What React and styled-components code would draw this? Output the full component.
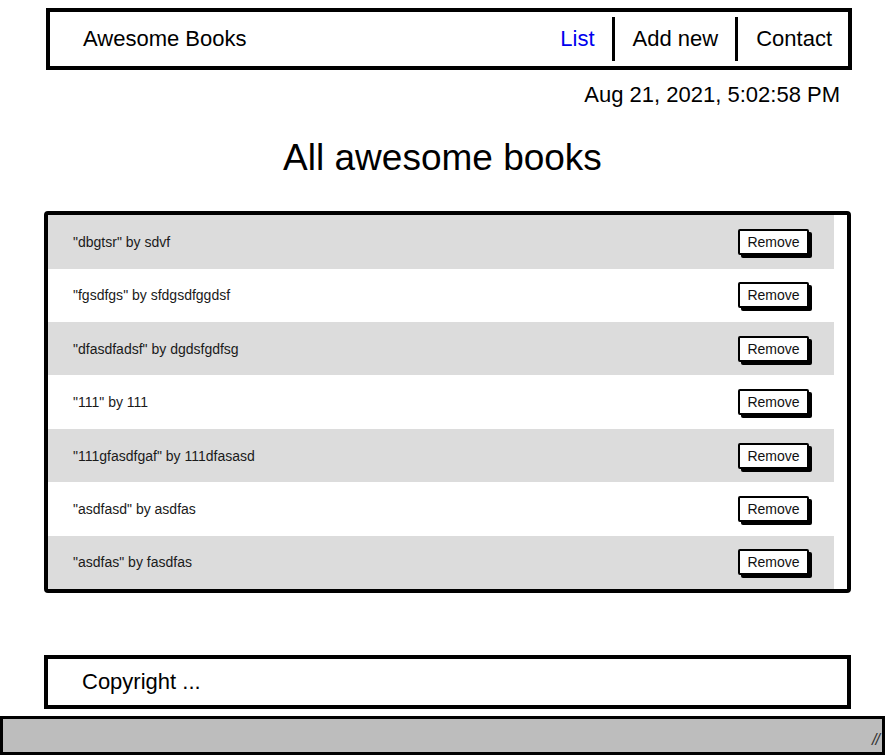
import React from "react";
import styled, { createGlobalStyle } from "styled-components";

const Global = createGlobalStyle`
  html, body { margin: 0; padding: 0; background: #fff; }
  body { font-family: "Liberation Sans", Arial, sans-serif; color: #000; }
  * { box-sizing: border-box; }
`;

const Page = styled.div`
  width: 885px;
  height: 755px;
  display: flex;
  flex-direction: column;
  overflow: hidden;
`;

const Header = styled.header`
  margin: 8px 0 0 46px;
  width: 806px;
  height: 63px;
  border: 4px solid #000;
  display: flex;
  align-items: center;
  justify-content: space-between;
  padding: 0 16px 0 33px;
`;

const Brand = styled.div`
  font-size: 22px;
`;

const Nav = styled.nav`
  display: flex;
  align-items: stretch;
  height: 44px;
`;

const NavLink = styled.a`
  display: flex;
  align-items: center;
  padding: 0 17px 0 18px;
  font-size: 22px;
  color: ${(p) => (p.$active ? "#0000ee" : "#000")};
  text-decoration: none;
  border-left: ${(p) => (p.$first ? "none" : "3px solid #000")};
  &:last-child { padding-right: 0; }
`;

const DateLine = styled.div`
  margin: 12px 0 0 0;
  width: 840px;
  text-align: right;
  font-size: 22px;
  line-height: 25px;
`;

const Heading = styled.h1`
  margin: 30px 0 0 0;
  text-align: center;
  font-size: 37px;
  font-weight: normal;
  line-height: 42px;
`;

const ListBox = styled.section`
  margin: 32px 0 0 44px;
  width: 807px;
  height: 382px;
  border: 4px solid #000;
  border-radius: 4px;
  padding: 0 13px 0 0;
`;

const Row = styled.div`
  height: 53.43px;
  display: flex;
  align-items: center;
  justify-content: space-between;
  padding: 0 25px;
  background: ${(p) => (p.$shaded ? "#dcdcdc" : "#fff")};
  font-size: 14px;
  color: #1a1a1a;
`;

const RemoveButton = styled.button`
  width: 71px;
  height: 26px;
  margin-right: 0;
  border: 2px solid #000;
  border-radius: 2px;
  background: #fff;
  box-shadow: 3px 3px 0 #000;
  font-family: "Liberation Sans", Arial, sans-serif;
  font-size: 14px;
  color: #111;
  padding: 0;
  cursor: pointer;
`;

const Footer = styled.footer`
  margin: 62px 0 0 44px;
  width: 807px;
  height: 55px;
  border: 4px solid #000;
  display: flex;
  align-items: center;
  padding-left: 34px;
  font-size: 22px;
`;

const StatusBar = styled.div`
  margin-top: 7px;
  width: 885px;
  height: 39px;
  border: 3px solid #000;
  background: #bdbdbd;
  display: flex;
  align-items: flex-end;
  justify-content: flex-end;
  padding: 0 3px 3px 0;
  font-size: 16px;
  font-style: italic;
  color: #333;
  letter-spacing: -1px;
`;

const books = [
  { title: "dbgtsr", author: "sdvf" },
  { title: "fgsdfgs", author: "sfdgsdfggdsf" },
  { title: "dfasdfadsf", author: "dgdsfgdfsg" },
  { title: "111", author: "111" },
  { title: "111gfasdfgaf", author: "111dfasasd" },
  { title: "asdfasd", author: "asdfas" },
  { title: "asdfas", author: "fasdfas" },
];

export default function App() {
  return (
    <>
      <Global />
      <Page>
        <Header>
          <Brand>Awesome Books</Brand>
          <Nav>
            <NavLink href="#" $active $first>List</NavLink>
            <NavLink href="#">Add new</NavLink>
            <NavLink href="#">Contact</NavLink>
          </Nav>
        </Header>
        <DateLine>Aug 21, 2021, 5:02:58 PM</DateLine>
        <Heading>All awesome books</Heading>
        <ListBox>
          {books.map((b, i) => (
            <Row key={i} $shaded={i % 2 === 0}>
              <span>"{b.title}" by {b.author}</span>
              <RemoveButton>Remove</RemoveButton>
            </Row>
          ))}
        </ListBox>
        <Footer>Copyright ...</Footer>
        <StatusBar>//</StatusBar>
      </Page>
    </>
  );
}
